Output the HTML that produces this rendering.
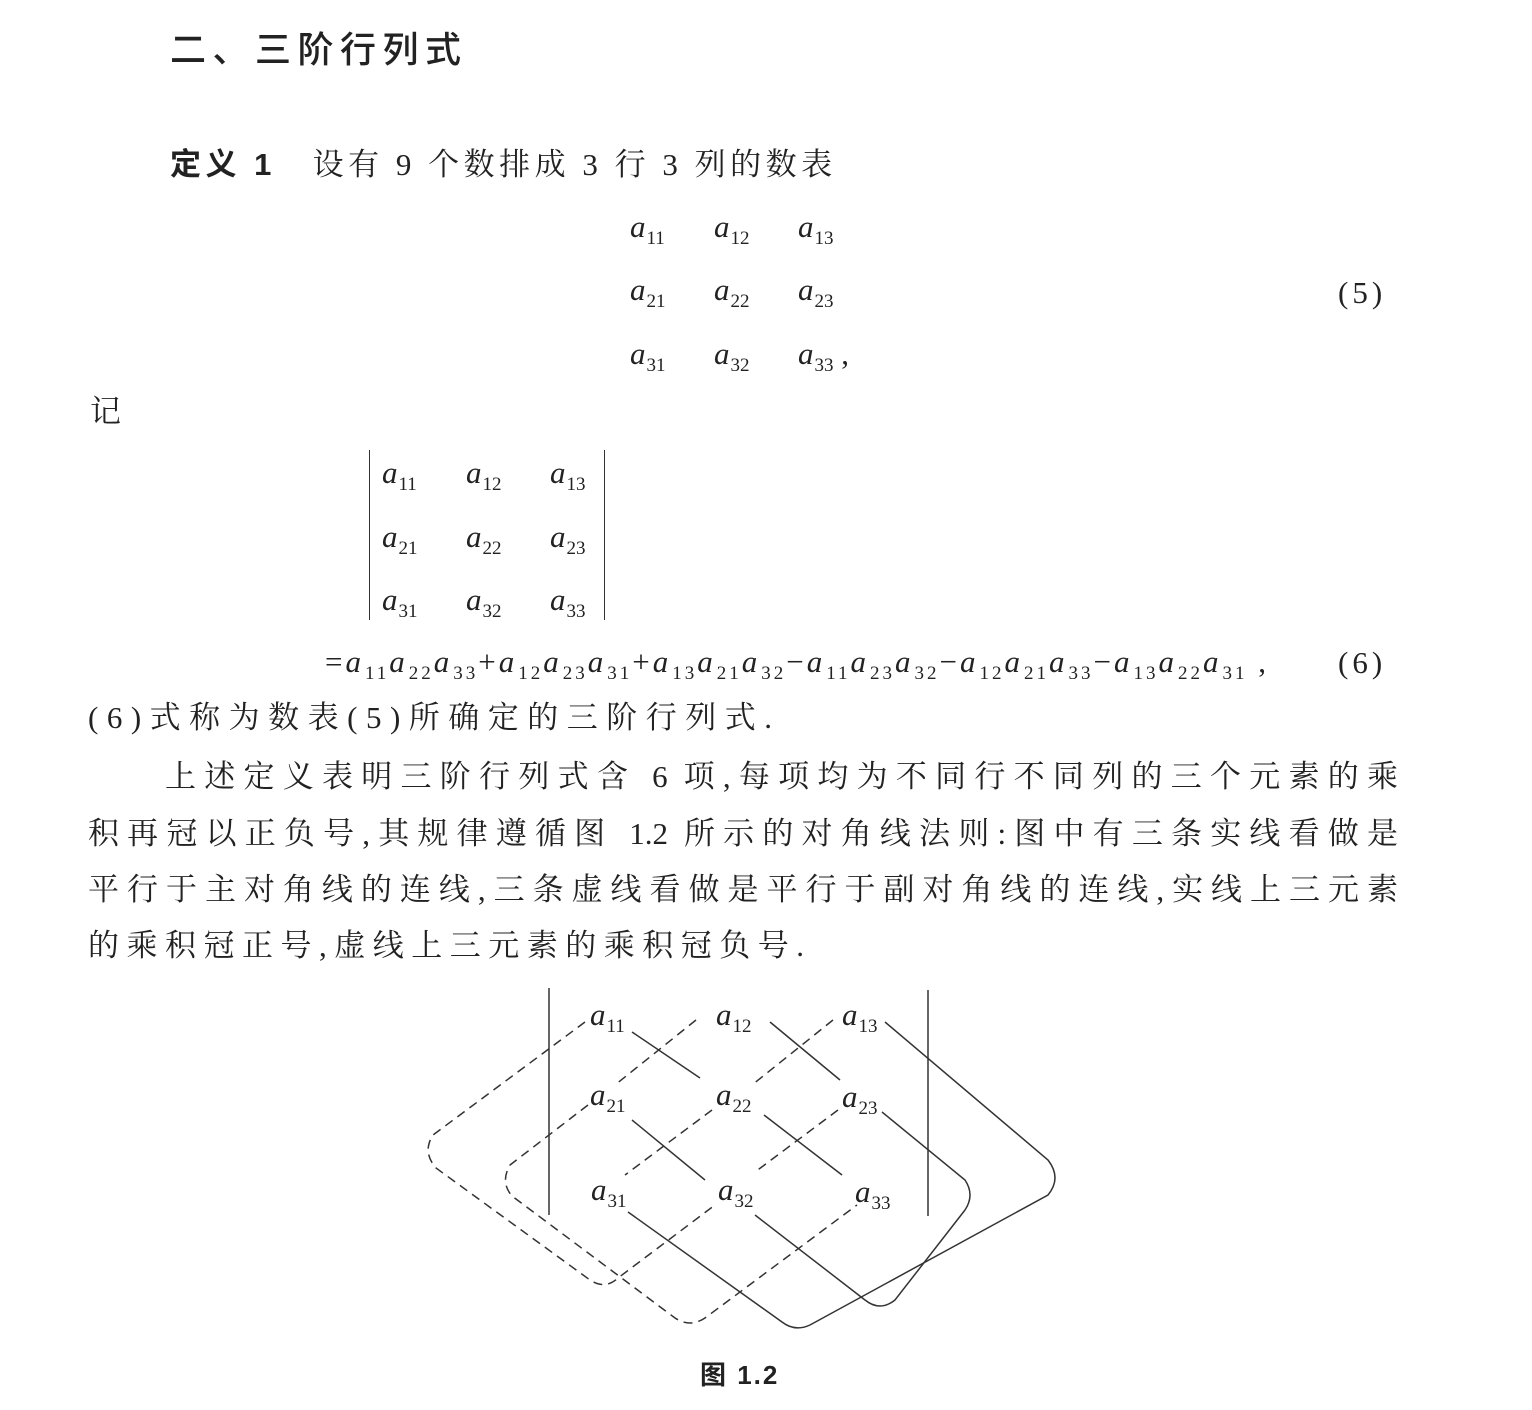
<!DOCTYPE html>
<html><head><meta charset="utf-8"><style>
body{margin:0;background:#fff;}
#p{position:relative;width:1532px;height:1410px;overflow:hidden;background:#fff;color:#222;font-family:"Liberation Serif","Noto Serif CJK SC",serif;}
.t{position:absolute;white-space:nowrap;font-size:31px;line-height:34px;}
.j{position:absolute;font-size:31px;line-height:34px;text-align:justify;text-align-last:justify;white-space:nowrap;}
.m{position:absolute;font-size:31px;line-height:34px;font-style:italic;white-space:nowrap;font-family:"Liberation Serif",serif;}
.m sub{font-style:normal;font-size:19px;vertical-align:-7px;margin-left:1px;}
.b{font-family:"Liberation Sans","Noto Sans CJK SC",sans-serif;font-weight:bold;}
</style></head><body><div id="p">
<div class="t" style="left:170px;top:30px;font-size:36px;line-height:40px;letter-spacing:6.5px;font-family:'Liberation Sans','Noto Sans CJK SC',sans-serif;font-weight:500">二、三阶行列式</div>
<div class="t" style="left:170px;top:148px;letter-spacing:4.5px"><span class="b">定义 1</span>&nbsp;&nbsp;&nbsp;设有 9 个数排成 3 行 3 列的数表</div>

<div class="m" style="left:630px;top:210px">a<sub>11</sub></div>
<div class="m" style="left:714px;top:210px">a<sub>12</sub></div>
<div class="m" style="left:798px;top:210px">a<sub>13</sub></div>
<div class="m" style="left:630px;top:273px">a<sub>21</sub></div>
<div class="m" style="left:714px;top:273px">a<sub>22</sub></div>
<div class="m" style="left:798px;top:273px">a<sub>23</sub></div>
<div class="m" style="left:630px;top:337px">a<sub>31</sub></div>
<div class="m" style="left:714px;top:337px">a<sub>32</sub></div>
<div class="m" style="left:798px;top:337px">a<sub>33</sub><span style="font-style:normal"> ,</span></div>
<div class="t" style="left:1338px;top:276px;letter-spacing:4px">(5)</div>

<div class="t" style="left:90px;top:395px">记</div>
<div style="position:absolute;left:369px;top:450px;width:1px;height:170px;background:#333"></div>
<div style="position:absolute;left:604px;top:450px;width:1px;height:170px;background:#333"></div>
<div class="m" style="left:382px;top:456px">a<sub>11</sub></div>
<div class="m" style="left:466px;top:456px">a<sub>12</sub></div>
<div class="m" style="left:550px;top:456px">a<sub>13</sub></div>
<div class="m" style="left:382px;top:520px">a<sub>21</sub></div>
<div class="m" style="left:466px;top:520px">a<sub>22</sub></div>
<div class="m" style="left:550px;top:520px">a<sub>23</sub></div>
<div class="m" style="left:382px;top:583px">a<sub>31</sub></div>
<div class="m" style="left:466px;top:583px">a<sub>32</sub></div>
<div class="m" style="left:550px;top:583px">a<sub>33</sub></div>

<div class="m" style="left:325px;top:645px;letter-spacing:3px"><span style="font-style:normal">=</span>a<sub>11</sub>a<sub>22</sub>a<sub>33</sub><span style="font-style:normal">+</span>a<sub>12</sub>a<sub>23</sub>a<sub>31</sub><span style="font-style:normal">+</span>a<sub>13</sub>a<sub>21</sub>a<sub>32</sub><span style="font-style:normal">−</span>a<sub>11</sub>a<sub>23</sub>a<sub>32</sub><span style="font-style:normal">−</span>a<sub>12</sub>a<sub>21</sub>a<sub>33</sub><span style="font-style:normal">−</span>a<sub>13</sub>a<sub>22</sub>a<sub>31</sub><span style="font-style:normal"> ,</span></div>
<div class="t" style="left:1338px;top:646px;letter-spacing:4px">(6)</div>
<div class="t" style="left:88px;top:701px;letter-spacing:8.5px">(6)式称为数表(5)所确定的三阶行列式.</div>

<div class="j" style="left:165px;top:760px;width:1233px">上述定义表明三阶行列式含 6 项,每项均为不同行不同列的三个元素的乘</div>
<div class="j" style="left:88px;top:817px;width:1310px">积再冠以正负号,其规律遵循图 1.2 所示的对角线法则:图中有三条实线看做是</div>
<div class="j" style="left:88px;top:873px;width:1310px">平行于主对角线的连线,三条虚线看做是平行于副对角线的连线,实线上三元素</div>
<div class="t" style="left:88px;top:929px;letter-spacing:7.5px">的乘积冠正号,虚线上三元素的乘积冠负号.</div>

<svg style="position:absolute;left:0;top:0" width="1532" height="1410">
<g fill="none" stroke="#333" stroke-width="1.5">
<line x1="549" y1="988" x2="549" y2="1215"/>
<line x1="928" y1="990" x2="928" y2="1216"/>
<line x1="632" y1="1032" x2="700" y2="1078"/>
<line x1="770" y1="1022" x2="840" y2="1080"/>
<line x1="632" y1="1120" x2="705" y2="1180"/>
<line x1="764" y1="1115" x2="842" y2="1175"/>
<path d="M885 1022 L1048 1160 Q1062 1178 1048 1195 L810 1325 Q795 1332 782 1322 L628 1212"/>
<path d="M882 1112 L965 1180 Q975 1195 965 1210 L895 1300 Q880 1312 865 1300 L755 1215"/>
</g>
<g fill="none" stroke="#333" stroke-width="1.5" stroke-dasharray="9,6">
<path d="M585 1022 L433 1135 Q422 1152 436 1168 L590 1280 Q605 1290 618 1278 L715 1205"/>
<line x1="838" y1="1110" x2="755" y2="1172"/>
<path d="M588 1105 L510 1165 Q500 1182 512 1196 L675 1318 Q690 1328 705 1318 L857 1205"/>
<line x1="696" y1="1020" x2="615" y2="1085"/>
<line x1="833" y1="1020" x2="752" y2="1085"/>
<line x1="712" y1="1110" x2="625" y2="1175"/>
</g>
</svg>
<div class="m" style="left:590px;top:998px">a<sub>11</sub></div>
<div class="m" style="left:716px;top:998px">a<sub>12</sub></div>
<div class="m" style="left:842px;top:998px">a<sub>13</sub></div>
<div class="m" style="left:590px;top:1078px">a<sub>21</sub></div>
<div class="m" style="left:716px;top:1078px">a<sub>22</sub></div>
<div class="m" style="left:842px;top:1080px">a<sub>23</sub></div>
<div class="m" style="left:591px;top:1173px">a<sub>31</sub></div>
<div class="m" style="left:718px;top:1173px">a<sub>32</sub></div>
<div class="m" style="left:855px;top:1175px">a<sub>33</sub></div>
<div class="t b" style="left:700px;top:1360px;font-size:26px;line-height:30px;letter-spacing:2px">图 1.2</div>
</div></body></html>
